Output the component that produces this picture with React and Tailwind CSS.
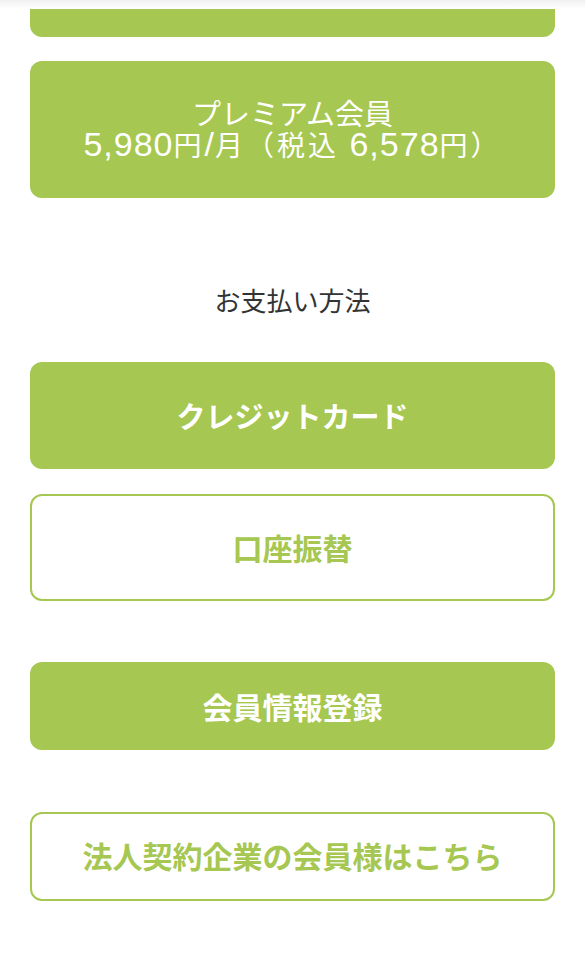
export default function App() {
  const font = { fontFamily: '"Noto Sans CJK JP", "Noto Sans", sans-serif' };
  const latin = { fontFamily: '"Liberation Sans", "Noto Sans CJK JP", sans-serif' };
  return (
    <div className="w-[585px] h-[974px] bg-white overflow-hidden" style={font}>
      <div className="h-[9px] bg-gradient-to-b from-[#f1f1f1] to-white" />
      <div className="px-[30px] flex flex-col">
        <div className="h-[28px] bg-[#a6c751] rounded-b-[12px]" />
        <div className="mt-[24px] h-[137px] bg-[#a6c751] rounded-[12px] flex flex-col items-center justify-center text-white pt-[2px]">
          <div className="text-[29px] leading-[30px]">プレミアム会員</div>
          <div className="text-[28px] leading-[34px] tracking-[3px] whitespace-nowrap" style={latin}>
            <span className="text-[34px] leading-[34px] tracking-[1px]">5,980</span>円<span className="text-[34px] leading-[34px] tracking-[1px]">/</span>月（税込<span className="text-[34px] leading-[34px] tracking-[1px]"> 6,578</span>円）
          </div>
        </div>
        <div className="mt-[82px] h-[39px] flex items-center justify-center text-[26px] text-[#333333]">
          お支払い方法
        </div>
        <div className="mt-[43px] h-[107px] bg-[#a6c751] rounded-[12px] flex items-center justify-center text-white text-[29px] font-bold">
          クレジットカード
        </div>
        <div className="mt-[25px] h-[107px] border-2 border-[#a6c751] rounded-[12px] flex items-center justify-center text-[#a6c751] text-[30px] font-bold">
          口座振替
        </div>
        <div className="mt-[61px] h-[88px] bg-[#a6c751] rounded-[12px] flex items-center justify-center text-white text-[30px] font-bold">
          会員情報登録
        </div>
        <div className="mt-[62px] h-[89px] border-2 border-[#a6c751] rounded-[12px] flex items-center justify-center text-[#a6c751] text-[30px] font-bold pb-[2px]">
          法人契約企業の会員様はこちら
        </div>
      </div>
    </div>
  );
}
